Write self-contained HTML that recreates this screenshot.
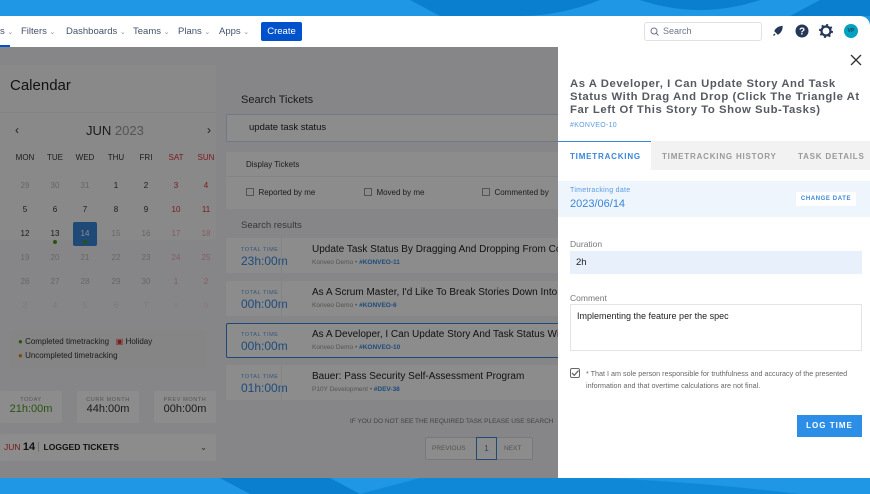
<!DOCTYPE html>
<html><head><meta charset="utf-8"><style>
*{box-sizing:border-box;margin:0;padding:0}
body{width:870px;height:494px;overflow:hidden;position:relative;font-family:"Liberation Sans",Arial,sans-serif;background:#1f97e4}
.a{position:absolute}
.nav{left:0;top:16px;width:870px;height:31px;background:#fff;border-radius:0 10px 0 0}
.nv{top:26px;font-size:9.5px;color:#42526e;white-space:nowrap}
.nv b{font-weight:normal;font-size:7px;color:#8993a4}
.main{left:0;top:47px;width:870px;height:431px;background:#f4f5f7;overflow:hidden;border-radius:0 0 10px 0}
.card{background:#fff;border-radius:2px}
.ov{left:0;top:47px;width:558px;height:431px;background:rgba(0,0,0,0.45)}
.cd{font-size:8px;color:#333;width:20px;text-align:center}
.g{color:#bbb}.r{color:#d33}.rl{color:#eaa}
.tt{font-size:5.5px;color:#5a9be0;letter-spacing:0.6px;white-space:nowrap}
.tv{font-size:12px;color:#3a8ae0}
.rt{font-size:10px;color:#222}
.rs{font-size:6.5px;color:#999}
.rs i{font-style:normal;color:#3a8ae0;font-weight:bold}
.dr{left:558px;top:47px;width:312px;height:431px;background:#fff}
.lbl{font-size:8.5px;color:#777}
</style></head><body>
<svg class="a" style="left:0;top:0" width="870" height="494">
<path d="M410 0 L600 0 Q560 16 520 16 L440 16Z" fill="#0a7fcf"/>
<path d="M760 0 Q700 20 640 0Z" fill="#0a7fcf"/>
<path d="M820 0 L870 0 L870 16 L790 16Z" fill="#0a7fcf"/>
<path d="M220 478 L330 478 L360 494 L250 494Z" fill="#0a7fcf"/>
<path d="M420 478 Q600 470 800 494 L360 494Z" fill="#0f88d8"/>
</svg>
<div class="a nav"></div>
<div class="a nv" style="left:0">s <b>⌄</b></div>
<div class="a nv" style="left:21px">Filters <b>⌄</b></div>
<div class="a nv" style="left:66px">Dashboards <b>⌄</b></div>
<div class="a nv" style="left:133px">Teams <b>⌄</b></div>
<div class="a nv" style="left:178px">Plans <b>⌄</b></div>
<div class="a nv" style="left:219px">Apps <b>⌄</b></div>
<div class="a" style="left:0;top:45px;width:10px;height:2px;background:#0052cc"></div>
<div class="a" style="left:261px;top:22px;width:41px;height:19px;background:#0052cc;border-radius:2px;color:#fff;font-size:9.5px;text-align:center;line-height:19px">Create</div>
<div class="a" style="left:644px;top:22px;width:118px;height:19px;border:1px solid #dfe1e6;border-radius:3px;font-size:9px;color:#6b778c;line-height:17px;padding-left:18px">Search</div>
<svg class="a" style="left:650px;top:27px" width="9" height="9"><circle cx="4" cy="4" r="3" stroke="#6b778c" fill="none"/><path d="M6 6 L8.5 8.5" stroke="#6b778c"/></svg>
<svg class="a" style="left:772px;top:25px" width="12" height="12"><path d="M1.5 10.5 L3 9 M3 6 Q5 2 10 1.5 Q10 6.5 6 9 Z" fill="#253858" stroke="#253858" stroke-width="1.3"/></svg>
<svg class="a" style="left:795px;top:24px" width="14" height="14"><circle cx="7" cy="7" r="6.5" fill="#253858"/><text x="7" y="10.5" font-size="10" font-weight="bold" fill="#fff" text-anchor="middle" font-family="Liberation Sans">?</text></svg>
<svg class="a" style="left:819px;top:24px" width="14" height="14"><circle cx="7" cy="7" r="4.5" fill="none" stroke="#253858" stroke-width="2.2"/><circle cx="7" cy="7" r="6" fill="none" stroke="#253858" stroke-width="2" stroke-dasharray="2 2.7"/></svg>
<div class="a" style="left:844px;top:24px;width:14px;height:14px;border-radius:50%;background:#00a3bf;color:#253858;font-size:5px;font-weight:bold;text-align:center;line-height:14px">VP</div>

<div class="a main">
 <div class="a card" style="left:0;top:18px;width:216px;height:175px;background:#fafafa"></div>
 <div class="a" style="left:0;top:18px;width:216px;height:48px;border-bottom:1px solid #eee"></div>
 <div class="a" style="left:10px;top:30px;font-size:15px;color:#222">Calendar</div>
 <div class="a" style="left:15px;top:76px;font-size:12px;color:#333">‹</div>
 <div class="a" style="left:207px;top:76px;font-size:12px;color:#333">›</div>
 <div class="a" style="left:86px;top:76px;font-size:13px;color:#333">JUN <span style="color:#999">2023</span></div>
 <div class="a" style="left:0;top:106px;width:216px;font-size:6.5px;color:#555">
  <span class="a cd" style="left:15px">MON</span><span class="a cd" style="left:45px">TUE</span><span class="a cd" style="left:75px">WED</span><span class="a cd" style="left:106px">THU</span><span class="a cd" style="left:136px">FRI</span><span class="a cd r" style="left:166px">SAT</span><span class="a cd r" style="left:196px">SUN</span>
 </div>
 <div class="a" style="left:0;top:134px">
  <span class="a cd g" style="left:15px">29</span><span class="a cd g" style="left:45px">30</span><span class="a cd g" style="left:75px">31</span><span class="a cd" style="left:106px">1</span><span class="a cd" style="left:136px">2</span><span class="a cd r" style="left:166px">3</span><span class="a cd r" style="left:196px">4</span>
 </div>
 <div class="a" style="left:0;top:158px">
  <span class="a cd" style="left:15px">5</span><span class="a cd" style="left:45px">6</span><span class="a cd" style="left:75px">7</span><span class="a cd" style="left:106px">8</span><span class="a cd" style="left:136px">9</span><span class="a cd r" style="left:166px">10</span><span class="a cd r" style="left:196px">11</span>
 </div>
 <div class="a" style="left:73px;top:175px;width:24px;height:24px;background:#3a86d8;border-radius:2px"></div>
 <div class="a" style="left:0;top:182px">
  <span class="a cd" style="left:15px">12</span><span class="a cd" style="left:45px">13</span><span class="a cd" style="left:75px;color:#fff">14</span><span class="a cd g" style="left:106px">15</span><span class="a cd g" style="left:136px">16</span><span class="a cd rl" style="left:166px">17</span><span class="a cd rl" style="left:196px">18</span>
 </div>
 <div class="a" style="left:53px;top:193px;width:4px;height:4px;border-radius:50%;background:#4a9a20"></div>
 <div class="a" style="left:83px;top:193px;width:4px;height:4px;border-radius:50%;background:#4a9a20"></div>
 <div class="a" style="left:0;top:206px">
  <span class="a cd g" style="left:15px">19</span><span class="a cd g" style="left:45px">20</span><span class="a cd g" style="left:75px">21</span><span class="a cd g" style="left:106px">22</span><span class="a cd g" style="left:136px">23</span><span class="a cd rl" style="left:166px">24</span><span class="a cd rl" style="left:196px">25</span>
 </div>
 <div class="a" style="left:0;top:230px">
  <span class="a cd g" style="left:15px">26</span><span class="a cd g" style="left:45px">27</span><span class="a cd g" style="left:75px">28</span><span class="a cd g" style="left:106px">29</span><span class="a cd g" style="left:136px">30</span><span class="a cd rl" style="left:166px">1</span><span class="a cd rl" style="left:196px">2</span>
 </div>
 <div class="a" style="left:0;top:254px">
  <span class="a cd" style="left:15px;color:#ddd">3</span><span class="a cd" style="left:45px;color:#ddd">4</span><span class="a cd" style="left:75px;color:#ddd">5</span><span class="a cd" style="left:106px;color:#ddd">6</span><span class="a cd" style="left:136px;color:#ddd">7</span><span class="a cd" style="left:166px;color:#fdd">8</span><span class="a cd" style="left:196px;color:#fdd">9</span>
 </div>
 <div class="a" style="left:10px;top:283px;width:196px;height:38px;background:#f2f2f2;font-size:8px;color:#333">
  <div class="a" style="left:8px;top:7px"><span style="color:#4a9a20">●</span> Completed timetracking &nbsp;&nbsp;<span style="color:#d33">▣</span> Holiday</div>
  <div class="a" style="left:8px;top:21px"><span style="color:#e08a10">●</span> Uncompleted timetracking</div>
 </div>
 <div class="a card" style="left:0;top:344px;width:62px;height:32px;text-align:center"><div class="tt" style="color:#999;margin-top:6px">TODAY</div><div style="font-size:11px;color:#4a9a20">21h:00m</div></div>
 <div class="a card" style="left:77px;top:344px;width:62px;height:32px;text-align:center"><div class="tt" style="color:#999;margin-top:6px">CURR MONTH</div><div style="font-size:11px;color:#333">44h:00m</div></div>
 <div class="a card" style="left:154px;top:344px;width:62px;height:32px;text-align:center"><div class="tt" style="color:#999;margin-top:6px">PREV MONTH</div><div style="font-size:11px;color:#333">00h:00m</div></div>
 <div class="a card" style="left:0;top:387px;width:216px;height:27px;font-size:8.5px;color:#222;line-height:27px">
  <span style="margin-left:4px;color:#d33">JUN</span> <b style="font-size:11px">14</b> <span style="border-left:1px solid #ccc;padding-left:5px;font-weight:bold">LOGGED TICKETS</span>
  <span class="a" style="left:200px;top:0;color:#555">⌄</span>
 </div>
 <div class="a" style="left:241px;top:47px;font-size:11px;color:#333">Search Tickets</div>
 <div class="a card" style="left:226px;top:67px;width:340px;height:28px;border:1px solid #cde;font-size:9.5px;color:#222;line-height:26px;padding-left:22px">update task status</div>
 <div class="a card" style="left:226px;top:105px;width:340px;height:57px;font-size:8px;color:#333">
  <div style="padding:8px 0 0 20px">Display Tickets</div>
  <div class="a" style="left:0;top:24px;width:340px;border-top:1px solid #eee"></div>
  <div class="a" style="left:20px;top:36px"><span style="display:inline-block;width:8px;height:8px;border:1px solid #999;vertical-align:-1px"></span>&nbsp; Reported by me</div>
  <div class="a" style="left:138px;top:36px"><span style="display:inline-block;width:8px;height:8px;border:1px solid #999;vertical-align:-1px"></span>&nbsp; Moved by me</div>
  <div class="a" style="left:256px;top:36px"><span style="display:inline-block;width:8px;height:8px;border:1px solid #999;vertical-align:-1px"></span>&nbsp; Commented by</div>
 </div>
 <div class="a" style="left:241px;top:173px;font-size:9.5px;color:#666">Search results</div>
 <div class="a card" style="left:226px;top:191px;width:340px;height:35px"><div class="a tt" style="left:15px;top:9px">TOTAL TIME</div><div class="a tv" style="left:15px;top:16px">23h:00m</div><div class="a" style="left:55px;top:0;height:35px;border-left:1px solid #eee"></div><div class="a rt" style="left:86px;top:6px;white-space:nowrap">Update Task Status By Dragging And Dropping From Co</div><div class="a rs" style="left:86px;top:21px">Konveo Demo • <i>#KONVEO-11</i></div></div>
 <div class="a card" style="left:226px;top:234px;width:340px;height:35px"><div class="a tt" style="left:15px;top:9px">TOTAL TIME</div><div class="a tv" style="left:15px;top:16px">00h:00m</div><div class="a" style="left:55px;top:0;height:35px;border-left:1px solid #eee"></div><div class="a rt" style="left:86px;top:6px;white-space:nowrap">As A Scrum Master, I'd Like To Break Stories Down Into</div><div class="a rs" style="left:86px;top:21px">Konveo Demo • <i>#KONVEO-6</i></div></div>
 <div class="a card" style="left:226px;top:276px;width:340px;height:35px;border:1px solid #3a86d8"><div class="a tt" style="left:14px;top:8px">TOTAL TIME</div><div class="a tv" style="left:14px;top:15px">00h:00m</div><div class="a rt" style="left:85px;top:5px;white-space:nowrap">As A Developer, I Can Update Story And Task Status Wi</div><div class="a rs" style="left:85px;top:20px">Konveo Demo • <i>#KONVEO-10</i></div></div>
 <div class="a card" style="left:226px;top:318px;width:340px;height:35px"><div class="a tt" style="left:15px;top:9px">TOTAL TIME</div><div class="a tv" style="left:15px;top:16px">01h:00m</div><div class="a" style="left:55px;top:0;height:35px;border-left:1px solid #eee"></div><div class="a rt" style="left:86px;top:6px;white-space:nowrap">Bauer: Pass Security Self-Assessment Program</div><div class="a rs" style="left:86px;top:21px">P10Y Development • <i>#DEV-38</i></div></div>
 <div class="a" style="left:350px;top:371px;font-size:6.5px;color:#777;white-space:nowrap">IF YOU DO NOT SEE THE REQUIRED TASK PLEASE USE SEARCH</div>
 <div class="a card" style="left:425px;top:390px;width:108px;height:23px;border:1px solid #ddd;font-size:6.5px;color:#999;line-height:21px">
  <span class="a" style="left:6px">PREVIOUS</span>
  <span class="a" style="left:50px;top:-1px;width:21px;height:23px;border:1px solid #3a86d8;text-align:center;color:#3a86d8;font-size:8px">1</span>
  <span class="a" style="left:78px">NEXT</span>
 </div>
</div>
<div class="a ov"></div>

<div class="a dr">
 <svg class="a" style="left:292px;top:7px" width="12" height="12"><path d="M1 1 L11 11 M11 1 L1 11" stroke="#333" stroke-width="1.3"/></svg>
 <div class="a" style="left:12px;top:31px;width:300px;font-size:11.3px;font-weight:bold;color:#555a62;line-height:13px;letter-spacing:0.55px">As A Developer, I Can Update Story And Task Status With Drag And Drop (Click The Triangle At Far Left Of This Story To Show Sub-Tasks)</div>
 <div class="a" style="left:12px;top:75px;font-size:7px;color:#5a9be0;letter-spacing:0.3px">#KONVEO-10</div>
 <div class="a" style="left:0;top:94px;width:312px;height:29px;background:#f2f2f2"></div>
 <div class="a" style="left:0;top:94px;width:93px;height:29px;background:#fff;border-top:1px solid #3a86d8"></div>
 <div class="a" style="left:12px;top:105px;font-size:8px;font-weight:bold;color:#3a86d8;letter-spacing:0.8px">TIMETRACKING</div>
 <div class="a" style="left:104px;top:105px;font-size:8px;font-weight:bold;color:#999;letter-spacing:0.8px;white-space:nowrap">TIMETRACKING HISTORY</div>
 <div class="a" style="left:240px;top:105px;font-size:8px;font-weight:bold;color:#999;letter-spacing:0.8px;white-space:nowrap">TASK DETAILS</div>
 <div class="a" style="left:0;top:134px;width:312px;height:36px;background:#eef5fd"></div>
 <div class="a" style="left:12px;top:140px;font-size:7px;color:#5a9be0;letter-spacing:0.3px">Timetracking date</div>
 <div class="a" style="left:12px;top:151px;font-size:11px;color:#3a86d8">2023/06/14</div>
 <div class="a" style="left:238px;top:145px;width:60px;height:14px;background:#fff;font-size:6px;font-weight:bold;color:#3a86d8;text-align:center;line-height:14px;letter-spacing:0.6px">CHANGE DATE</div>
 <div class="a lbl" style="left:12px;top:192px">Duration</div>
 <div class="a" style="left:12px;top:204px;width:292px;height:23px;background:#e8f0fc;font-size:9.5px;color:#222;line-height:23px;padding-left:6px">2h</div>
 <div class="a lbl" style="left:12px;top:246px">Comment</div>
 <div class="a" style="left:12px;top:257px;width:292px;height:47px;border:1px solid #e4e4e4;font-size:9px;color:#222;padding:6px 0 0 6px">Implementing the feature per the spec</div>
 <svg class="a" style="left:12px;top:321px" width="10" height="10"><rect x="0.5" y="0.5" width="9" height="9" rx="1.5" fill="none" stroke="#666"/><path d="M2 5 L4.3 7.3 L8.5 2.5" stroke="#666" fill="none" stroke-width="1.3"/></svg>
 <div class="a" style="left:28px;top:321px;width:280px;font-size:7.2px;color:#666;line-height:12px">* That I am sole person responsible for truthfulness and accuracy of the presented information and that overtime calculations are not final.</div>
 <div class="a" style="left:239px;top:368px;width:65px;height:22px;background:#2d8ee8;color:#fff;font-size:8px;font-weight:bold;text-align:center;line-height:22px;letter-spacing:1px">LOG TIME</div>
</div>
</body></html>
